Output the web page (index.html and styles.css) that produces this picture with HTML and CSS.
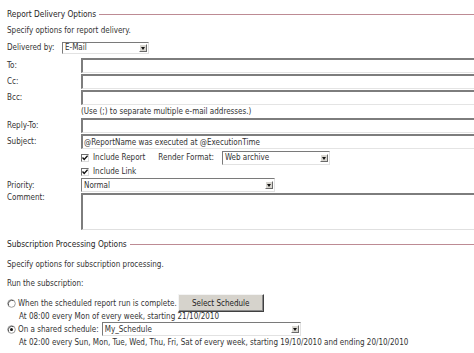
FILE: index.html
```html
<!DOCTYPE html>
<html>
<head>
<meta charset="utf-8">
<link rel="stylesheet" href="styles.css">
</head>
<body>
<div class="page">
  <div class="section-head"><span class="title">Report Delivery Options</span><i class="rule"></i></div>
  <div class="desc">Specify options for report delivery.</div>
  <div class="delivered">
    <span class="dlabel">Delivered by:</span>
    <div class="select sel-deliv"><span class="val">E-Mail</span><span class="arrow"></span></div>
  </div>

  <div class="form">
    <div class="frow"><span class="label">To:</span><div class="input"></div></div>
    <div class="frow"><span class="label">Cc:</span><div class="input"></div></div>
    <div class="frow"><span class="label">Bcc:</span><div class="input"></div></div>
    <div class="frow note"><span class="label"></span><span class="notetext">(Use (;) to separate multiple e-mail addresses.)</span></div>
    <div class="frow"><span class="label">Reply-To:</span><div class="input"></div></div>
    <div class="frow"><span class="label">Subject:</span><div class="input"><span class="val">@ReportName was executed at @ExecutionTime</span></div></div>
    <div class="frow inc"><span class="label"></span>
      <span class="check"><svg viewBox="0 0 8 8" width="8" height="8"><path d="M1.5 3.5 L3.2 5.4 L6.6 1.6" fill="none" stroke="#111" stroke-width="1.4"/></svg></span>
      <span class="inctext">Include Report</span>
      <span class="rf">Render Format:</span>
      <div class="select sel-render"><span class="val">Web archive</span><span class="arrow"></span></div>
    </div>
    <div class="frow inc2"><span class="label"></span>
      <span class="check"><svg viewBox="0 0 8 8" width="8" height="8"><path d="M1.5 3.5 L3.2 5.4 L6.6 1.6" fill="none" stroke="#111" stroke-width="1.4"/></svg></span>
      <span class="inctext">Include Link</span>
    </div>
    <div class="frow prio"><span class="label">Priority:</span>
      <div class="select sel-prio"><span class="val">Normal</span><span class="arrow"></span></div>
    </div>
    <div class="frow comment"><span class="label">Comment:</span><div class="textarea"></div></div>
  </div>

  <div class="section-head head2"><span class="title">Subscription Processing Options</span><i class="rule"></i></div>
  <div class="desc desc2">Specify options for subscription processing.</div>
  <div class="desc run">Run the subscription:</div>

  <div class="radio-row r1">
    <span class="radio"><svg viewBox="0 0 9 9" width="9" height="9"><circle cx="4.5" cy="4.5" r="3.8" fill="#fff" stroke="#9a9a9a" stroke-width="1"/><path d="M1.7 6.5 A3.6 3.6 0 0 1 6.5 1.7" fill="none" stroke="#555" stroke-width="1"/></svg></span>
    <span class="rtext">When the scheduled report run is complete.</span>
    <span class="button">Select Schedule</span>
  </div>
  <div class="sched s1">At 08:00 every Mon of every week, starting 21/10/2010</div>
  <div class="radio-row r2">
    <span class="radio"><svg viewBox="0 0 9 9" width="9" height="9"><circle cx="4.5" cy="4.5" r="3.8" fill="#fff" stroke="#9a9a9a" stroke-width="1"/><path d="M1.7 6.5 A3.6 3.6 0 0 1 6.5 1.7" fill="none" stroke="#555" stroke-width="1"/><circle cx="4.5" cy="4.5" r="1.5" fill="#111"/></svg></span>
    <span class="rtext">On a shared schedule:</span>
    <div class="select sel-sched"><span class="val">My_Schedule</span><span class="arrow"></span></div>
  </div>
  <div class="sched s2">At 02:00 every Sun, Mon, Tue, Wed, Thu, Fri, Sat of every week, starting 19/10/2010 and ending 20/10/2010</div>
</div>
</body>
</html>
```
FILE: styles.css
```css
html, body {
  margin: 0;
  padding: 0;
  overflow: hidden;
  background: #fff;
}
body {
  width: 474px;
  height: 353px;
  font-family: "DejaVu Sans Condensed", "DejaVu Sans", sans-serif;
  font-size: 8px;
  color: #333;
}
.page {
  padding: 8px 0 0 7px;
  width: 467px;
}
.section-head {
  display: flex;
  align-items: center;
  height: 12px;
  gap: 3px;
}
.section-head .title {
  font-size: 8.3px;
  color: #262626;
  white-space: nowrap;
}
.section-head .rule {
  flex: 1;
  height: 1px;
  background: #bd8b94;
}
.desc {
  height: 12px;
  line-height: 12px;
  margin-top: 5px;
  white-space: nowrap;
}
.delivered {
  display: flex;
  align-items: center;
  height: 13px;
  margin-top: 4px;
}
.dlabel {
  width: 55px;
}
.select {
  display: flex;
  align-items: center;
  box-sizing: border-box;
  height: 12px;
  background: #fff;
  border-top: 1px solid #7a7a7a;
  border-left: 1px solid #7a7a7a;
  border-right: 1px solid #e2e2e2;
  border-bottom: 1px solid #e2e2e2;
}
.select .val {
  flex: 1;
  padding-left: 2px;
  white-space: nowrap;
}
.select .arrow {
  width: 8px;
  height: 8px;
  margin-right: 1px;
  background: #d8d6d0;
  border: 1px solid #fff;
  border-right-color: #6a6a6a;
  border-bottom-color: #6a6a6a;
  position: relative;
  box-sizing: border-box;
}
.select .arrow::after {
  content: "";
  position: absolute;
  left: 1px;
  top: 2px;
  border-left: 2.5px solid transparent;
  border-right: 2.5px solid transparent;
  border-top: 3px solid #111;
}
.sel-deliv { width: 87px; }
.form {
  margin-top: 4px;
  display: flex;
  flex-direction: column;
}
.frow {
  display: flex;
  align-items: flex-start;
  height: 16px;
}
.frow .label {
  width: 74px;
  flex: none;
  line-height: 15px;
}
.input {
  box-sizing: border-box;
  height: 15px;
  flex: 1;
  border-top: 2px solid #7d7d7d;
  border-left: 2px solid #7d7d7d;
  border-bottom: 1px solid #e4e4e4;
  background: #fff;
  display: flex;
  align-items: center;
}
.input .val {
  padding-left: 1px;
  white-space: nowrap;
}
.frow.note {
  height: 12px;
  line-height: 12px;
}
.notetext { white-space: nowrap; }
.frow.inc {
  height: 15px;
  align-items: center;
}
.frow.inc2 {
  height: 13px;
  align-items: center;
}
.check {
  width: 8px;
  height: 8px;
  box-sizing: border-box;
  background: #fff;
  border-top: 1px solid #6e6e6e;
  border-left: 1px solid #6e6e6e;
  border-right: 1px solid #dcdcdc;
  border-bottom: 1px solid #dcdcdc;
  display: flex;
  align-items: center;
  justify-content: center;
  overflow: hidden;
}
.check svg { flex: none; }
.inctext {
  margin-left: 4px;
  white-space: nowrap;
}
.rf {
  margin-left: 13px;
  white-space: nowrap;
}
.sel-render {
  margin-left: 8px;
  width: 108px;
  height: 14px;
}
.frow.prio {
  height: 15px;
}
.sel-prio {
  width: 194px;
  height: 14px;
}
.frow.comment {
  height: 37px;
}
.frow.comment .label { line-height: 9px; }
.textarea {
  box-sizing: border-box;
  flex: 1;
  height: 37px;
  border-top: 2px solid #7d7d7d;
  border-left: 2px solid #7d7d7d;
  border-bottom: 1px solid #e0e0e0;
  background: #fff;
}
.head2 { margin-top: 8px; }
.desc2 { margin-top: 9px; }
.run { margin-top: 7px; }
.radio-row {
  display: flex;
  align-items: center;
  white-space: nowrap;
}
.r1 {
  margin-top: 4px;
  height: 18px;
}
.radio {
  width: 9px;
  height: 9px;
  display: flex;
}
.rtext { margin-left: 2px; }
.button {
  margin-left: 1px;
  box-sizing: border-box;
  width: 86px;
  height: 18px;
  background: #d6d3cc;
  border: 1px solid #404040;
  border-top-color: #f4f4f4;
  border-left-color: #f4f4f4;
  box-shadow: inset -1px -1px 0 #8a8a8a;
  display: flex;
  align-items: center;
  justify-content: center;
  color: #222;
}
.sched {
  padding-left: 12px;
  height: 10px;
  line-height: 10px;
  white-space: nowrap;
}
.r2 {
  height: 14px;
}
.sel-sched {
  margin-left: 3px;
  width: 199px;
  height: 14px;
}
.s2 { margin-top: 2px; }
```
